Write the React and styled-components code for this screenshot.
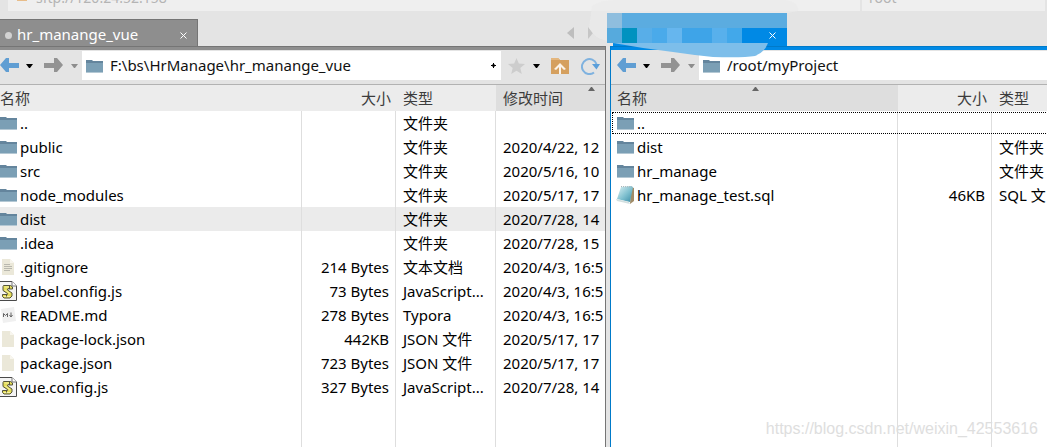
import React from "react";
import styled, { createGlobalStyle, css } from "styled-components";

const Global = createGlobalStyle`
  *, *::before, *::after { box-sizing: border-box; }
  body {
    margin: 0;
    background: #e4e4e4;
    color: #000;
    font: 15px/24px "Noto Sans", "Noto Sans CJK SC", sans-serif;
  }
`;

const Page = styled.div`
  position: relative;
  display: flex;
  flex-direction: column;
  min-height: 100vh;
  overflow: hidden;
`;

const SessionBar = styled.div`
  display: grid;
  grid-template-columns: minmax(0, 852fr) minmax(0, 183fr);
  gap: 2px;
  height: 11px;
  padding: 0 2px 0 8px;
`;

const SessionCell = styled.div`
  display: flex;
  align-items: flex-end;
  gap: 9px;
  height: 11px;
  padding: 0 0 3px ${(p) => p.$inset}px;
  overflow: hidden;
  background: #efefef;
  color: #b4b4b4;
  font-size: 14px;
  line-height: 20px;
`;

const SessionMark = styled.i`
  align-self: flex-start;
  width: 10px;
  height: 1px;
  background: #e8bd8a;
`;

const Panes = styled.main`
  display: grid;
  flex: 1;
  grid-template-columns: minmax(0, 606fr) minmax(0, 437fr);
  gap: 4px;
`;

const Pane = styled.section`
  display: flex;
  flex-direction: column;
  min-width: 0;
`;

const TabRow = styled.div`
  display: flex;
  align-items: flex-end;
  height: 35px;
  padding-left: ${(p) => (p.$active ? 3 : 0)}px;
`;

const Tab = styled.div`
  display: flex;
  align-items: center;
  width: ${(p) => (p.$active ? 174 : 198)}px;
  height: ${(p) => (p.$active ? 33 : 27)}px;
  padding: 5px 8px 0 5px;
  background: ${(p) => (p.$active ? "#0089e5" : "#8e8e8e")};
  border: solid ${(p) => (p.$active ? "#0089e5" : "#757575")};
  border-width: 1px 1px 0 0;
  color: #fff;
`;

const TabTitle = styled.span`
  padding-bottom: 4px;
`;

const TabDot = styled.i`
  width: 7px;
  height: 7px;
  margin-right: 5px;
  border-radius: 4px;
  background: #d2d2d2;
`;

const iconButton = css`
  display: flex;
  align-items: center;
  justify-content: center;
  padding: 0;
  border: 0;
  background: none;
  color: inherit;
`;

const TabClose = styled.button`
  ${iconButton}
  width: 12px;
  height: 16px;
  margin-left: auto;
`;

const TabScroll = styled.div`
  display: flex;
  align-self: center;
  gap: 12px;
  margin: 8px 12px 0 auto;
`;

const ScrollButton = styled.button`
  ${iconButton}
  width: 8px;
  height: 12px;
`;

const Frame = styled.div`
  display: flex;
  flex: 1;
  flex-direction: column;
  min-width: 0;
  border-top: 1px solid ${(p) => (p.$active ? "#007ac9" : "#757575")};
  ${(p) => (p.$active ? "border-left: 1px solid #007ac9;" : "border-right: 1px solid #757575;")}
`;

const Accent = styled.div`
  height: 3px;
  background: ${(p) => (p.$active ? "#0089e5" : "#8e8e8e")};
`;

const Toolbar = styled.div`
  display: flex;
  align-items: center;
  height: 35px;
  padding: 1px 0 4px ${(p) => (p.$active ? 6 : 0)}px;
  border-bottom: 1px solid #b2b2b2;
`;

const ToolButton = styled.button`
  ${iconButton}
  width: ${(p) => p.$width}px;
  height: 29px;
`;

const Address = styled.label`
  display: flex;
  flex: 1;
  align-items: center;
  gap: 7px;
  min-width: 0;
  height: 29px;
  padding: 0 4px;
  background: #fff;
`;

const PathInput = styled.input`
  flex: 1;
  min-width: 0;
  padding: 0 0 2px;
  border: 0;
  outline: 0;
  background: none;
  color: #111;
  font: inherit;
`;

const Listing = styled.div`
  display: flex;
  flex: 1;
  flex-direction: column;
  overflow: hidden;
  background: #fff;
`;

const ListTable = styled.table`
  flex: 1;
  width: 100%;
  min-width: ${(p) => p.$minWidth}px;
  table-layout: fixed;
  border-collapse: separate;
  border-spacing: 0;
  background: #fff;
`;

const Head = styled.th`
  position: relative;
  height: 26px;
  padding: 0 ${(p) => (p.$right ? 5 : 0)}px 0 ${(p) => p.$inset}px;
  background: ${(p) => (p.$sorted ? "#dedede" : "#ececec")};
  color: #3c3c3c;
  font-weight: 400;
  text-align: ${(p) => (p.$right ? "right" : "left")};
`;

const SortMark = styled.svg`
  position: absolute;
  top: 2px;
  left: calc(50% - 3px);
`;

const Row = styled.tr`
  height: 24px;
  background: ${(p) => (p.$selected ? "#ebebeb" : "transparent")};
  ${(p) => p.$focused && "outline: 1px dotted #000; outline-offset: -2px;"}
`;

const Cell = styled.td`
  height: ${(p) => (p.$filler ? "auto" : "24px")};
  padding: 0 ${(p) => (p.$right ? 6 : 0)}px 0 ${(p) => p.$inset}px;
  overflow: hidden;
  border-right: 1px solid #dedede;
  text-align: ${(p) => (p.$right ? "right" : "left")};
  white-space: nowrap;
  &:last-child { border-right: 0; }
`;

const FileName = styled.span`
  display: flex;
  align-items: center;
  gap: 3px;
  height: 24px;
`;

const Watermark = styled.div`
  position: absolute;
  right: 9px;
  bottom: 6px;
  color: #dedede;
  font: 16px/24px "Liberation Sans", Arial, sans-serif;
`;

const SmearAnchor = styled.div`
  position: relative;
  align-self: flex-start;
  width: 0;
  height: 0;
`;

const Smear = styled.svg`
  position: absolute;
  top: -46px;
  left: -21px;
  pointer-events: none;
`;

const Folder = () => (
  <svg width="17" height="16" viewBox="0 0 17 16" aria-hidden="true">
    <path d="M0 2h6l1 1h10v3H0z" fill="#64859d" />
    <path d="M0 5h17v9H0z" fill="#7b9fb5" />
    <path d="M0 14h17v1H0z" fill="#b4c8d4" />
  </svg>
);

const Doc = ({ lines }) => (
  <svg width="17" height="18" viewBox="0 0 17 18" aria-hidden="true">
    <path d="M2 1h8l4 4v12H2z" fill="#ebe8d9" />
    <path d="M10 1v4h4z" fill="#f8f6ee" />
    {lines && <path d="M4 6.500h6M4 8.500h8M4 10.500h8M4 12.500h6" stroke="#b9b8ae" />}
  </svg>
);

const Script = () => (
  <svg width="17" height="20" viewBox="0 0 17 20" aria-hidden="true">
    <path d="M0 .5h12l4.500 4.500v14.500H0z" fill="#f4f4f4" />
    <path d="M0 .5h12l4.500 4.500v14.500H0" fill="none" stroke="#4a4a4a" />
    <path d="M12 .5V5h4.500" fill="#fff" stroke="#777" />
    <path d="M3.500 4.500h7l2 1.500v2H9.500L8 7.500 7.500 9l4.500 3v3l-2 2H4l-1.500-1.500v-2H6l1 .5.500-1.500L3 9.500v-4z" fill="#e4dc58" stroke="#55543a" />
    <path d="M4.500 6h5M5 9l5 3.500M4 15.500h6" fill="none" stroke="#f6f2a4" />
    <path d="M9.500 5v3M6.500 13v2.500" stroke="#55543a" />
  </svg>
);

const Markdown = () => (
  <svg width="17" height="18" viewBox="0 0 17 18" aria-hidden="true">
    <path d="M1 3l13-2 2 14-13 2z" fill="#f0f0f0" />
    <path d="M3.500 11V7.500l2 2 2-2V11M11 6.500V11M9.500 9l1.500 2 1.500-2" fill="none" stroke="#666" />
  </svg>
);

const Notepad = () => (
  <svg width="17" height="18" viewBox="0 0 17 18" overflow="visible" aria-hidden="true">
    <defs>
      <linearGradient id="page" x1="0" y1="0" x2="1" y2="1">
        <stop offset="0" stopColor="#e0f3f5" />
        <stop offset=".55" stopColor="#7fc0cf" />
        <stop offset="1" stopColor="#388aa5" />
      </linearGradient>
    </defs>
    <path d="M14 1l3 1v13l-4 3z" fill="#a18c68" />
    <path d="M4 1l10-1 2 1-3 15-13-3z" fill="url(#page)" />
    <path d="M-1 13l13 3 1 2-13-3z" fill="#d2dfe0" />
    <path d="M4 .5l11 .5" stroke="#a7b1b4" strokeDasharray="1 1" />
  </svg>
);

const icons = { folder: Folder, doc: Doc, script: Script, md: Markdown, notepad: Notepad };

const Arrow = ({ forward }) => (
  <svg width="19" height="15" viewBox="0 0 19 15" aria-hidden="true">
    {forward ? (
      <path d="M0 5h10V0h3l6 7-6 7h-3v-4H0z" fill="#939393" />
    ) : (
      <path d="M19 5H9V0H6L0 7l6 7h3v-4h10z" fill="#609ed3" />
    )}
  </svg>
);

const Caret = ({ muted }) => (
  <svg width="7" height="4" viewBox="0 0 7 4" aria-hidden="true">
    <path d="M0 0h7L4 4H3z" fill={muted ? "#8d8d8d" : "#000"} />
  </svg>
);

const Cross = () => (
  <svg width="7" height="7" viewBox="0 0 7 7" aria-hidden="true">
    <path d="M.5.5l6 6M6.500.5l-6 6" stroke="#fff" />
  </svg>
);

function Navigation() {
  return (
    <>
      <ToolButton $width={19} aria-label="Back"><Arrow /></ToolButton>
      <ToolButton $width={21} aria-label="Back history"><Caret /></ToolButton>
      <ToolButton $width={27} aria-label="Forward"><Arrow forward /></ToolButton>
      <ToolButton $width={15} aria-label="Forward history"><Caret muted /></ToolButton>
    </>
  );
}

function FileTable({ columns, rows, inset, sorted, minWidth }) {
  return (
    <Listing>
      <ListTable $minWidth={minWidth}>
        <colgroup>
          {columns.map((c) => <col key={c.label} width={c.width} />)}
        </colgroup>
        <thead>
          <tr>
            {columns.map((c, i) => (
              <Head key={c.label} $right={i === 1} $inset={i === 0 ? inset : 7} $sorted={i === sorted}>
                {c.label}
                {i === sorted && (
                  <SortMark width="7" height="4" viewBox="0 0 7 4" aria-hidden="true">
                    <path d="M3 0h1l3 4H0z" fill="#666" />
                  </SortMark>
                )}
              </Head>
            ))}
          </tr>
        </thead>
        <tbody>
          {rows.map(([icon, name, ...rest]) => {
            const Icon = icons[icon];
            return (
              <Row key={name} $selected={!inset && name === "dist"} $focused={!!inset && name === ".."}>
                <Cell $inset={inset}>
                  <FileName><Icon lines={name === ".gitignore"} />{name}</FileName>
                </Cell>
                {rest.map((text, i) => (
                  <Cell key={i} $right={i === 0} $inset={7}>{text}</Cell>
                ))}
              </Row>
            );
          })}
          <tr>
            {columns.map((c) => <Cell key={c.label} $filler $inset={0} />)}
          </tr>
        </tbody>
      </ListTable>
    </Listing>
  );
}

const localColumns = [
  { label: "名称", width: 302 },
  { label: "大小", width: 94 },
  { label: "类型", width: 100 },
  { label: "修改时间" },
];

const remoteColumns = [
  { label: "名称", width: 287 },
  { label: "大小", width: 94 },
  { label: "类型" },
];

const localRows = [
  ["folder", "..", "", "文件夹", ""],
  ["folder", "public", "", "文件夹", "2020/4/22, 12"],
  ["folder", "src", "", "文件夹", "2020/5/16, 10"],
  ["folder", "node_modules", "", "文件夹", "2020/5/17, 17"],
  ["folder", "dist", "", "文件夹", "2020/7/28, 14"],
  ["folder", ".idea", "", "文件夹", "2020/7/28, 15"],
  ["doc", ".gitignore", "214 Bytes", "文本文档", "2020/4/3, 16:5"],
  ["script", "babel.config.js", "73 Bytes", "JavaScript...", "2020/4/3, 16:5"],
  ["md", "README.md", "278 Bytes", "Typora", "2020/4/3, 16:5"],
  ["doc", "package-lock.json", "442KB", "JSON 文件", "2020/5/17, 17"],
  ["doc", "package.json", "723 Bytes", "JSON 文件", "2020/5/17, 17"],
  ["script", "vue.config.js", "327 Bytes", "JavaScript...", "2020/7/28, 14"],
];

const remoteRows = [
  ["folder", "..", "", ""],
  ["folder", "dist", "", "文件夹"],
  ["folder", "hr_manage", "", "文件夹"],
  ["notepad", "hr_manage_test.sql", "46KB", "SQL 文"],
];

const mosaic = ["#56aadd", "#0092c0", "#58aee8", "#4aaaea", "#66b6ee", "#3ea4e8", "#3ea4e8", "#58b0ec", "#42a8ea", "#0089e5", "#0089e5", "#0089e5"];

export default function App() {
  return (
    <Page>
      <Global />
      <SessionBar>
        <SessionCell $inset={9}><SessionMark />sftp://120.24.52.158</SessionCell>
        <SessionCell $inset={7}>root</SessionCell>
      </SessionBar>
      <Panes>
        <Pane>
          <TabRow>
            <Tab>
              <TabDot />
              <TabTitle>hr_manange_vue</TabTitle>
              <TabClose aria-label="Close tab"><Cross /></TabClose>
            </Tab>
            <TabScroll>
              <ScrollButton aria-label="Previous tab">
                <svg width="7" height="12" viewBox="0 0 7 12"><path d="M7 0v12L0 6z" fill="#bebebe" /></svg>
              </ScrollButton>
              <ScrollButton aria-label="Next tab">
                <svg width="7" height="12" viewBox="0 0 7 12"><path d="M1 0v12l5-6z" fill="#c6c6c6" /></svg>
              </ScrollButton>
            </TabScroll>
          </TabRow>
          <Frame>
            <Accent />
            <Toolbar>
              <Navigation />
              <Address>
                <Folder />
                <PathInput aria-label="Local path" defaultValue={"F:\\bs\\HrManage\\hr_manange_vue"} />
                <svg width="7" height="7" viewBox="0 0 7 7" aria-hidden="true">
                  <path d="M3 1h1v2h2v1H4v2H3V4H1V3h2z" fill="#000" />
                  <path d="M2 2h3v3H2z" fill="#000" opacity=".5" />
                </svg>
              </Address>
              <ToolButton $width={31} aria-label="Bookmark">
                <svg width="17" height="16" viewBox="0 0 17 16"><path d="M8.500 0l2.300 5.500 6.200.5-4.700 4 1.500 6-5.300-3.200L3.200 16l1.500-6L0 6l6.200-.5z" fill="#cdcdcd" /></svg>
              </ToolButton>
              <ToolButton $width={9} aria-label="Bookmarks"><Caret /></ToolButton>
              <ToolButton $width={38} aria-label="Parent folder">
                <svg width="18" height="16" viewBox="0 0 18 16">
                  <path d="M0 0h7l2 2h9v14H0z" fill="#d5a05f" />
                  <path d="M0 0h7l2 2H0z" fill="#e4b67d" />
                  <path d="M9 5l6 6-2 1-3-3v7H8V9l-3 3-2-1z" fill="#fbf3e8" />
                </svg>
              </ToolButton>
              <ToolButton $width={26} aria-label="Refresh">
                <svg width="22" height="18" viewBox="0 0 22 18">
                  <path d="M13 15.500A7.500 7.500 0 1 1 15.500 7" fill="none" stroke="#7fb2df" strokeWidth="2" />
                  <path d="M11 7h8l-3.500 5.500z" fill="#5b9fda" />
                </svg>
              </ToolButton>
            </Toolbar>
            <FileTable columns={localColumns} rows={localRows} inset={0} sorted={3} minWidth={685} />
          </Frame>
        </Pane>
        <Pane>
          <TabRow $active>
            <Tab $active>
              <TabClose aria-label="Close tab"><Cross /></TabClose>
            </Tab>
          </TabRow>
          <SmearAnchor>
            <Smear width="210" height="60" viewBox="589 0 210 60" aria-hidden="true">
              <path d="M592 6q8-6 24-6h170q14 3 12 11l-11 2H607v28q-12-2-18-13z" fill="#ebebeb" opacity=".7" />
              <path d="M607 42l36 6 30 4q20 3 40 5 30 1 42-1 10-4 13-13z" fill="#7dbeea" />
              <path d="M607 13h180v15H607z" fill="#5bace0" />
              <path d="M607 13h15v15h-15z" fill="#8fbede" />
              {mosaic.map((color, i) => (
                <rect key={i} x={607 + i * 15} y="28" width="15" height="15" fill={color} />
              ))}
              <path d="M769.500 32.500l6 6M775.500 32.500l-6 6" stroke="#fff" />
            </Smear>
          </SmearAnchor>
          <Frame $active>
            <Accent $active />
            <Toolbar $active>
              <Navigation />
              <Address>
                <Folder />
                <PathInput aria-label="Remote path" defaultValue="/root/myProject" />
              </Address>
            </Toolbar>
            <FileTable columns={remoteColumns} rows={remoteRows} inset={6} sorted={0} minWidth={482} />
          </Frame>
        </Pane>
      </Panes>
      <Watermark>https://blog.csdn.net/weixin_42553616</Watermark>
    </Page>
  );
}
